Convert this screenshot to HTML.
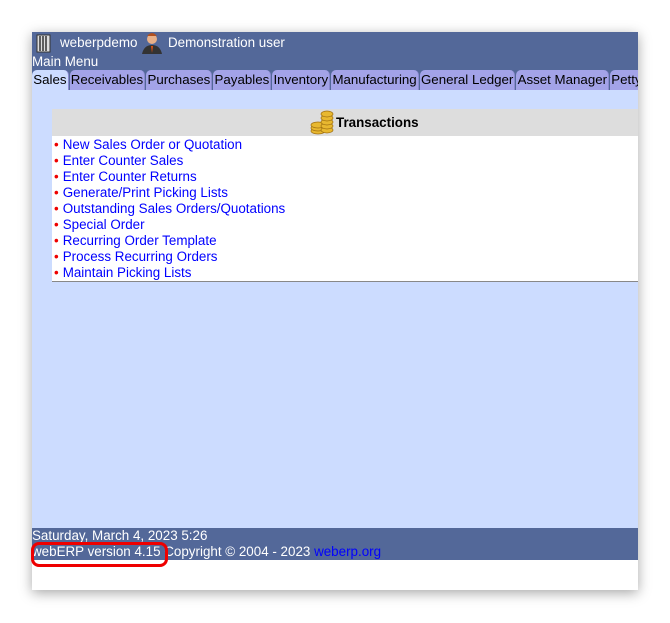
<!DOCTYPE html>
<html><head><meta charset="utf-8"><style>
body{margin:0;background:#fff;width:670px;height:623px;overflow:hidden;font-family:"Liberation Sans",sans-serif;font-size:13.4px;}
#frame{position:absolute;left:32px;top:32px;width:606px;height:558px;background:#fff;box-shadow:0 3px 12px rgba(0,0,0,.35);overflow:hidden;}
#top{background:#536899;height:58px;color:#fff;position:relative;}
.tabs{position:absolute;top:38px;left:0;white-space:nowrap;font-size:13.3px;}
.tab{display:inline-block;background:#a3a3e8;color:#000;padding:2px 1px 2px 1.25px;margin-right:1px;border-radius:5px 5px 0 0;height:16px;line-height:16px;border-right:1px solid #8a8ad0;}
.tab.sel{background:#ccdcff;}
#main{background:#ccdcff;height:438px;position:relative;}
#box{position:absolute;left:20px;top:19px;width:600px;background:#fff;border-bottom:1px solid #888;}
#box .h{background:#ddd;height:27px;font-weight:bold;text-align:left;padding-left:284px;line-height:27px;position:relative;}
#box ul{list-style:none;margin:0;padding:1px 0 0 2px;}
#box li{height:16px;line-height:16px;color:#00f;}
#box li:before{content:"•";color:#e00;margin-right:4px;}
#foot{background:#536899;height:32px;color:#fff;line-height:16px;}
</style></head><body>
<div id="frame">
<div id="top">
 <svg style="position:absolute;left:3px;top:1px" width="18" height="20"><rect x="2" y="2" width="13" height="17" fill="#ddd" stroke="#333"/><path d="M5 3v15M8 3v15M11 3v15" stroke="#333" stroke-width="1.5"/></svg>
 <span style="position:absolute;left:28px;top:3px">weberpdemo</span>
 <svg style="position:absolute;left:108px;top:0" width="24" height="22"><circle cx="12" cy="7" r="5" fill="#e8b088"/><path d="M7 4q5-6 10 0" fill="#b05020"/><path d="M2 22q2-9 10-9t10 9z" fill="#333"/><path d="M11 14h2l-1 7z" fill="#e05010"/></svg>
 <span style="position:absolute;left:136px;top:3px">Demonstration user</span>
 <span style="position:absolute;left:0;top:22px">Main Menu</span>
 <div class="tabs"><span class="tab sel">Sales</span><span class="tab">Receivables</span><span class="tab">Purchases</span><span class="tab">Payables</span><span class="tab">Inventory</span><span class="tab">Manufacturing</span><span class="tab">General Ledger</span><span class="tab">Asset Manager</span><span class="tab">Petty Cash</span></div>
</div>
<div id="main">
 <div id="box">
  <div class="h"><svg style="position:absolute;left:258px;top:1px" width="26" height="26"><g fill="#e8b830" stroke="#a07010" stroke-width=".7"><ellipse cx="8" cy="21" rx="7" ry="3"/><ellipse cx="8" cy="18" rx="7" ry="3"/><ellipse cx="8" cy="15" rx="7" ry="3"/><ellipse cx="17" cy="20" rx="6" ry="3"/><ellipse cx="17" cy="16" rx="6" ry="3"/><ellipse cx="17" cy="12" rx="6" ry="3"/><ellipse cx="17" cy="8" rx="6" ry="3"/><ellipse cx="17" cy="4" rx="6" ry="3"/></g></svg>Transactions</div>
  <ul>
   <li>New Sales Order or Quotation</li>
   <li>Enter Counter Sales</li>
   <li>Enter Counter Returns</li>
   <li>Generate/Print Picking Lists</li>
   <li>Outstanding Sales Orders/Quotations</li>
   <li>Special Order</li>
   <li>Recurring Order Template</li>
   <li>Process Recurring Orders</li>
   <li>Maintain Picking Lists</li>
  </ul>
 </div>
</div>
<div id="foot">Saturday, March 4, 2023 5:26<br>webERP version 4.15 Copyright © 2004 - 2023 <span style="color:#00f">weberp.org</span></div>
</div>
<div style="position:absolute;left:31px;top:542px;width:131px;height:19px;border:3px solid #e00;border-radius:8px;"></div>
</body></html>
